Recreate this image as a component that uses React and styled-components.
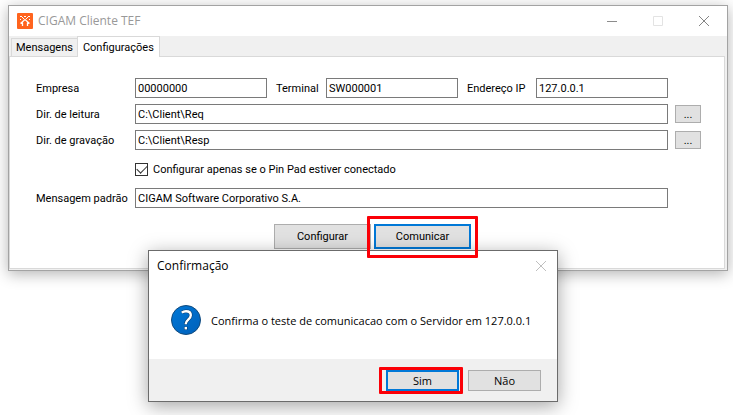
import { useState } from "react";
import styled, { createGlobalStyle } from "styled-components";

const GlobalStyle = createGlobalStyle`
  * {
    box-sizing: border-box;
  }

  body {
    margin: 0;
    background: #fff;
    color: #000;
    font-family: Roboto, "Liberation Sans", Arial, sans-serif;
    font-size: 11px;
  }

  button, input {
    font: inherit;
    color: inherit;
  }
`;

const Desktop = styled.div`
  position: relative;
  min-height: 100vh;
  padding: 5px 5px 12px 8px;
  overflow: hidden;
`;

const Window = styled.main`
  border: 1px solid #a3a3a3;
  background: #f0f0f0;
  box-shadow: 0 3px 14px rgba(0, 0, 0, 0.3);
`;

const TitleBar = styled.header`
  display: flex;
  align-items: center;
  height: 30px;
  padding-left: ${({ $inset }) => $inset}px;
  gap: 5px;
  background: #fff;
`;

const Title = styled.h1`
  flex: 1;
  margin: 0;
  font-family: "Open Sans", "Noto Sans", sans-serif;
  font-size: 12px;
  font-weight: 400;
  line-height: 16px;
  color: ${({ $muted }) => ($muted ? "#999" : "#000")};
`;

const Controls = styled.div`
  display: flex;
  align-self: stretch;
`;

const ControlButton = styled.button`
  display: flex;
  align-items: center;
  justify-content: center;
  width: ${({ $width }) => $width}px;
  padding: 0;
  border: 0;
  background: none;
  color: ${({ $color }) => $color};
`;

const Tabs = styled.div`
  display: flex;
  align-items: flex-end;
  height: 20px;
  padding-left: 2px;
`;

const Tab = styled.button`
  height: ${({ $active }) => ($active ? 21 : 18)}px;
  margin-bottom: ${({ $active }) => ($active ? -1 : 0)}px;
  padding: 0 ${({ $active }) => ($active ? 5 : 4)}px;
  border: 1px solid #d9d9d9;
  border-bottom: 0;
  border-right-width: ${({ $active }) => ($active ? 1 : 0)}px;
  background: ${({ $active }) => ($active ? "#fff" : "#f0f0f0")};
  white-space: nowrap;
`;

const Panel = styled.form`
  display: flex;
  flex-direction: column;
  gap: 6px;
  margin-right: 2px;
  margin-bottom: 1px;
  padding: 21px 23px 19px 26px;
  border: 1px solid #d9d9d9;
  background: #fff;
`;

const Row = styled.div`
  display: flex;
  align-items: center;
  padding-right: ${({ $inset }) => ($inset ? 33 : 0)}px;
`;

const Label = styled.label`
  flex: none;
  width: ${({ $width }) => $width}px;
  margin-left: ${({ $spaced }) => ($spaced ? 9 : 0)}px;
  white-space: nowrap;
`;

const TextInput = styled.input`
  flex: 1;
  min-width: 0;
  height: 20px;
  padding: 0 2px;
  border: 1px solid #7a7a7a;
  border-radius: 0;
  background: #fff;
  outline: none;
`;

const BrowseButton = styled.button`
  width: 26px;
  height: 18px;
  margin-left: 7px;
  padding: 0;
  border: 1px solid #adadad;
  background: #e1e1e1;
`;

const CheckRow = styled.label`
  display: flex;
  align-items: center;
  gap: 5px;
  height: 26px;
  padding-left: 99px;
`;

const Checkbox = styled.input`
  appearance: none;
  display: grid;
  place-items: center;
  width: 13px;
  height: 13px;
  margin: 0;
  border: 1px solid #333;
  background: #fff;

  &:checked::before {
    content: "";
    width: 9px;
    height: 5px;
    margin-bottom: 3px;
    border: solid #333;
    border-width: 0 0 1px 1px;
    transform: rotate(-45deg);
  }
`;

const Actions = styled.div`
  display: flex;
  gap: ${({ $gap }) => $gap}px;
`;

const FormActions = styled(Actions)`
  margin-top: 10px;
  padding-left: 238px;
`;

const Button = styled.button`
  width: ${({ $width }) => $width}px;
  height: ${({ $height }) => $height}px;
  padding: 0;
  border: ${({ $focused }) => ($focused ? "2px solid #0078d7" : "1px solid #adadad")};
  background: #e1e1e1;
`;

const Highlight = styled.span`
  position: relative;
  display: flex;

  &::after {
    content: "";
    position: absolute;
    z-index: 3;
    inset: ${({ $inset }) => $inset};
    border: 3px solid #fb0007;
    border-radius: 1px;
    pointer-events: none;
  }
`;

const Dialog = styled.section`
  position: absolute;
  z-index: 2;
  top: 250px;
  left: 148px;
  width: 410px;
  border: 1px solid #6b6b6b;
  background: #fff;
  box-shadow: 0 4px 18px rgba(0, 0, 0, 0.36);
  font-family: "Open Sans", "Noto Sans", sans-serif;
`;

const DialogBody = styled.div`
  display: flex;
  align-items: center;
  gap: 10px;
  height: 78px;
  padding-left: 22px;
`;

const Message = styled.p`
  margin: 0;
  font-size: 11px;
  white-space: nowrap;
`;

const DialogFooter = styled.footer`
  display: flex;
  justify-content: flex-end;
  padding: 11px 16px 10px;
  background: #f0f0f0;
`;

function Logo() {
  return (
    <svg width="16" height="16" viewBox="0 0 16 16" aria-hidden="true">
      <rect width="16" height="16" rx="1" fill="#ff641e" />
      <path
        d="M3.5 10.5L8 6.500l4.500 4M5.500 9.500V13M10.500 9.500V13"
        fill="none"
        stroke="#fff"
        strokeWidth="1.300"
      />
      <path
        d="M3 3h2v1H3zM11 3h2v1h-2zM7 3h2v1H7zM5 4h1v1H5zM10 4h1v1h-1zM3 6h1v1H3zM12 6h1v1h-1zM6 5h1v1H6zM9 5h1v1H9z"
        fill="#fff"
      />
    </svg>
  );
}

function MinimizeIcon() {
  return (
    <svg width="10" height="10" stroke="currentColor" aria-hidden="true">
      <path d="M0 5.5h10" />
    </svg>
  );
}

function MaximizeIcon() {
  return (
    <svg width="10" height="10" fill="none" stroke="currentColor" aria-hidden="true">
      <path d="M.5.5h9v9h-9z" />
    </svg>
  );
}

function CloseIcon() {
  return (
    <svg width="10" height="10" stroke="currentColor" aria-hidden="true">
      <path d="M0 0l10 10M10 0L0 10" />
    </svg>
  );
}

function QuestionIcon() {
  return (
    <svg width="30" height="30" viewBox="0 0 30 30" aria-hidden="true">
      <defs>
        <linearGradient id="question" x1="0" y1="0" x2="1" y2="1">
          <stop offset="0" stopColor="#0078d7" />
          <stop offset="1" stopColor="#0060ba" />
        </linearGradient>
      </defs>
      <circle cx="15" cy="15" r="14.5" fill="url(#question)" stroke="#124a7c" />
      <g fill="none" stroke="#0a3d70" strokeWidth="3.6">
        <path d="M10.8 7.7c1.2-1 2.6-1.500 4.200-1.500 2.800 0 4.800 1.400 4.800 4 0 4.200-5 4.600-5 8.600v.8" />
        <path d="M14.8 21.600v3.200" />
      </g>
      <g fill="none" stroke="#fff" strokeWidth="2.400">
        <path d="M10.8 7.700c1.200-1 2.600-1.500 4.200-1.500 2.800 0 4.800 1.400 4.800 4 0 4.200-5 4.600-5 8.600v.4" />
        <path d="M14.8 21.900v2.500" />
      </g>
    </svg>
  );
}

function App() {
  const [onlyConnected, setOnlyConnected] = useState(true);

  return (
    <Desktop>
      <GlobalStyle />

      <Window>
        <TitleBar $inset={8}>
          <Logo />
          <Title $muted>CIGAM Cliente TEF</Title>
          <Controls>
            <ControlButton $width={46} $color="#8c8c8c" aria-label="Minimizar">
              <MinimizeIcon />
            </ControlButton>
            <ControlButton $width={46} $color="#e3e3e3" aria-label="Maximizar">
              <MaximizeIcon />
            </ControlButton>
            <ControlButton $width={46} $color="#858585" aria-label="Fechar">
              <CloseIcon />
            </ControlButton>
          </Controls>
        </TitleBar>

        <Tabs role="tablist">
          <Tab type="button" role="tab" aria-selected="false">
            Mensagens
          </Tab>
          <Tab type="button" role="tab" aria-selected="true" $active>
            Configurações
          </Tab>
        </Tabs>

        <Panel onSubmit={(e) => e.preventDefault()}>
          <Row $inset>
            <Label htmlFor="empresa" $width={99}>
              Empresa
            </Label>
            <TextInput id="empresa" defaultValue="00000000" />
            <Label htmlFor="terminal" $width={50} $spaced>
              Terminal
            </Label>
            <TextInput id="terminal" defaultValue="SW000001" />
            <Label htmlFor="ip" $width={69} $spaced>
              Endereço IP
            </Label>
            <TextInput id="ip" defaultValue="127.0.0.1" />
          </Row>
          <Row>
            <Label htmlFor="leitura" $width={99}>
              Dir. de leitura
            </Label>
            <TextInput id="leitura" defaultValue="C:\Client\Req" />
            <BrowseButton type="button">...</BrowseButton>
          </Row>
          <Row>
            <Label htmlFor="gravacao" $width={99}>
              Dir. de gravação
            </Label>
            <TextInput id="gravacao" defaultValue="C:\Client\Resp" />
            <BrowseButton type="button">...</BrowseButton>
          </Row>
          <CheckRow>
            <Checkbox
              type="checkbox"
              checked={onlyConnected}
              onChange={(e) => setOnlyConnected(e.target.checked)}
            />
            Configurar apenas se o Pin Pad estiver conectado
          </CheckRow>
          <Row $inset>
            <Label htmlFor="mensagem" $width={99}>
              Mensagem padrão
            </Label>
            <TextInput
              id="mensagem"
              defaultValue="CIGAM Software Corporativo S.A."
            />
          </Row>
          <FormActions $gap={3}>
            <Button type="button" $width={97} $height={25}>
              Configurar
            </Button>
            <Highlight $inset="-8px -7px -9px">
              <Button type="button" $width={97} $height={25} $focused>
                Comunicar
              </Button>
            </Highlight>
          </FormActions>
        </Panel>
      </Window>

      <Dialog role="dialog" aria-labelledby="dialog-title">
        <TitleBar $inset={8}>
          <Title as="h2" id="dialog-title">
            Confirmação
          </Title>
          <ControlButton $width={32} $color="#bfbfbf" aria-label="Fechar">
            <CloseIcon />
          </ControlButton>
        </TitleBar>
        <DialogBody>
          <QuestionIcon />
          <Message>
            Confirma o teste de comunicacao com o Servidor em 127.0.0.1
          </Message>
        </DialogBody>
        <DialogFooter>
          <Actions $gap={9}>
            <Highlight $inset="-3px -4px -3px -7px">
              <Button type="button" $width={73} $height={21} $focused>
                Sim
              </Button>
            </Highlight>
            <Button type="button" $width={73} $height={21}>
              Não
            </Button>
          </Actions>
        </DialogFooter>
      </Dialog>
    </Desktop>
  );
}

export default App;
